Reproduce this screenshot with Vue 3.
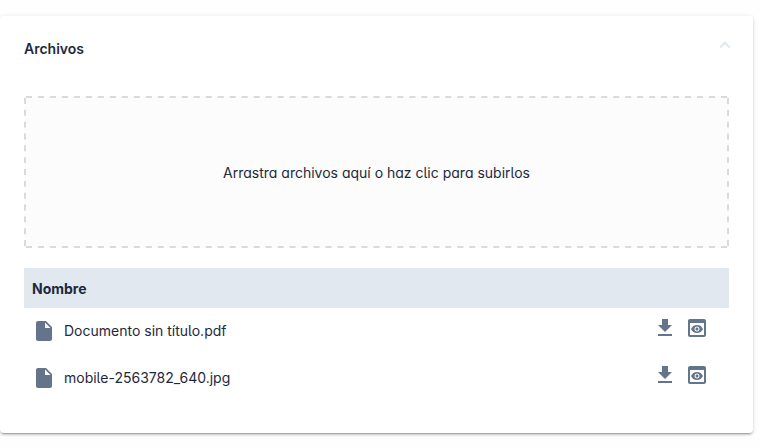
<script setup>
import { ref } from 'vue'

const open = ref(true)
const files = ref([
  { id: 1, name: 'Documento sin título.pdf' },
  { id: 2, name: 'mobile-2563782_640.jpg' },
])

function addFiles(list) {
  for (const file of list) {
    files.value.push({ id: files.value.length + 1, name: file.name })
  }
}
</script>

<template>
  <section class="panel">
    <h2 class="panel-title">
      <button type="button" class="toggle" :aria-expanded="open" @click="open = !open">
        <span>Archivos</span>
        <svg class="chevron" :class="{ closed: !open }" viewBox="0 0 12 8" aria-hidden="true">
          <path d="M1.1 6.6L6 1.7l4.9 4.9" />
        </svg>
      </button>
    </h2>
    <div v-if="open" class="content">
      <label class="dropzone" @dragover.prevent @drop.prevent="addFiles($event.dataTransfer.files)">
        <svg class="outline" aria-hidden="true">
          <line class="top" x2="100%" pathLength="117" />
          <line class="bottom" y1="100%" x2="100%" y2="100%" pathLength="117" />
          <line class="left" y2="100%" pathLength="25" />
          <line class="right" x1="100%" x2="100%" y2="100%" pathLength="25" />
        </svg>
        <input type="file" multiple class="file-input" @change="addFiles($event.target.files)" />
        <span>Arrastra archivos aquí o haz clic para subirlos</span>
      </label>
      <table class="files">
        <thead>
          <tr>
            <th colspan="2" scope="col">Nombre</th>
          </tr>
        </thead>
        <tbody>
          <tr v-for="file in files" :key="file.id">
            <td>
              <div class="name">
                <svg class="icon" viewBox="0 0 24 24" aria-hidden="true">
                  <path d="M6 2c-1.1 0-1.99.9-1.99 2L4 20c0 1.1.89 2 1.99 2H18c1.1 0 2-.9 2-2V8l-6-6H6zm7 7V3.5L18.5 9H13z" />
                </svg>
                <span>{{ file.name }}</span>
              </div>
            </td>
            <td>
              <div class="actions">
                <button type="button" class="action" aria-label="Descargar">
                  <svg class="icon" viewBox="0 0 24 24" aria-hidden="true">
                    <path d="M19 9h-4V3H9v6H5l7 7 7-7zM5 18v2h14v-2H5z" />
                  </svg>
                </button>
                <button type="button" class="action" aria-label="Vista previa">
                  <svg class="icon" viewBox="0 0 24 24" aria-hidden="true">
                    <path d="M19 3H5c-1.11 0-2 .9-2 2v14c0 1.1.89 2 2 2h14c1.1 0 2-.9 2-2V5c0-1.1-.9-2-2-2zm0 16H5V7h14v12zm-5.5-6c0 .83-.67 1.5-1.5 1.5s-1.5-.67-1.5-1.5.67-1.5 1.5-1.5 1.5.67 1.5 1.5zM12 9c-2.73 0-5.06 1.66-6 4 .94 2.34 3.27 4 6 4s5.06-1.66 6-4c-.94-2.34-3.27-4-6-4zm0 6.5c-1.38 0-2.5-1.12-2.5-2.5s1.12-2.5 2.5-2.5 2.5 1.12 2.5 2.5-1.12 2.5-2.5 2.5z" />
                  </svg>
                </button>
              </div>
            </td>
          </tr>
        </tbody>
      </table>
    </div>
  </section>
</template>

<style>
body {
  background: #fefefe;
}
</style>

<style scoped>
.panel {
  margin: 16px 7px 15px 0;
  background: #fff;
  border-radius: 4px;
  box-shadow:
    0 3px 1px -2px rgba(0, 0, 0, 0.2),
    0 2px 2px 0 rgba(0, 0, 0, 0.14),
    0 1px 5px 0 rgba(0, 0, 0, 0.12);
  color: #1e293b;
  font-family: Inter, "Liberation Sans", sans-serif;
  font-feature-settings: "cv11", "cv05";
  font-size: 14px;
  line-height: 20px;
}

.panel-title {
  margin: 0;
  font-size: 14px;
}

.toggle {
  display: flex;
  align-items: center;
  justify-content: space-between;
  width: 100%;
  height: 64px;
  padding: 2px 22px 0 24px;
  border: 0;
  background: none;
  color: inherit;
  font: inherit;
  font-feature-settings: inherit;
  font-weight: 600;
  cursor: pointer;
}

.chevron {
  width: 12px;
  height: 8px;
  margin-bottom: 8px;
  fill: none;
  stroke: #e2e8f0;
  stroke-width: 2;
}

.chevron.closed {
  transform: rotate(180deg);
}

.content {
  padding: 16px 24px 31px;
}

.dropzone {
  position: relative;
  display: flex;
  align-items: center;
  justify-content: center;
  min-height: 150px;
  padding-top: 2px;
  border-radius: 4px;
  background: #fcfcfc;
  cursor: pointer;
}

.outline {
  position: absolute;
  top: 2px;
  left: 2px;
  width: calc(100% - 4px);
  height: calc(100% - 4px);
  overflow: visible;
  stroke: #dadada;
  stroke-width: 2;
  stroke-dasharray: 1 1;
}

.top {
  transform: translateY(-1px);
}

.bottom {
  transform: translateY(1px);
}

.left {
  transform: translateX(-1px);
}

.right {
  transform: translateX(1px);
}

.file-input {
  position: absolute;
  width: 1px;
  height: 1px;
  opacity: 0;
}

.files {
  width: 100%;
  margin-top: 20px;
  border-collapse: collapse;
}

th {
  height: 38px;
  padding: 2px 8px 0;
  background: #e2e8f0;
  text-align: left;
  font-weight: 700;
}

td {
  height: 46px;
  padding: 0 8px 1px;
}

.name {
  display: flex;
  align-items: center;
  gap: 8px;
}

.actions {
  display: flex;
  justify-content: flex-end;
  gap: 8px;
  padding: 0 12px 6px 0;
}

.action {
  display: flex;
  padding: 0;
  border: 0;
  background: none;
  cursor: pointer;
}

.icon {
  width: 24px;
  height: 24px;
  fill: #64748b;
}
</style>
